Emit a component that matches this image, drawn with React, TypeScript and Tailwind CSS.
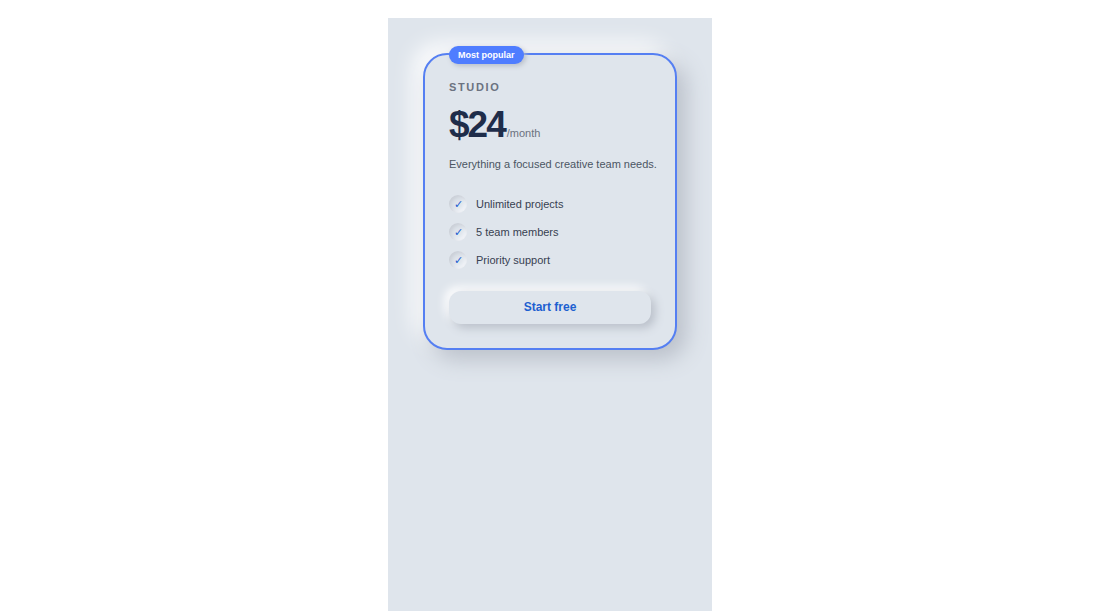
import React from "react";

const features = ["Unlimited projects", "5 team members", "Priority support"];

function FeatureItem({ label }: { label: string }) {
  return (
    <li className="flex items-center gap-[9px] text-[11px] leading-[18px] text-[#374151]">
      <span
        aria-hidden="true"
        className="flex size-[18px] shrink-0 items-center justify-center rounded-full text-[11px] text-[#1d5fd0] shadow-[inset_2px_2px_4px_#c8cdd5,inset_-2px_-2px_4px_#f4f6fa]"
      >
        ✓
      </span>
      {label}
    </li>
  );
}

export default function App() {
  return (
    <div className="flex h-screen justify-center overflow-hidden bg-white pt-[18px] font-['Liberation_Sans',Arial,sans-serif]">
      <main className="w-full max-w-[324px] overflow-hidden bg-[#dfe5ec] p-[35px]">
        <section className="relative rounded-3xl border-2 border-[#557ff2] bg-[#dfe5ec] p-6 shadow-[9px_9px_22px_#b9bfc9,-9px_-9px_22px_#ffffff]">
          <span className="absolute -top-[9px] left-6 rounded-full bg-[#4f7dff] px-[9px] text-[9px] leading-[18px] font-bold text-white shadow-[2px_2px_5px_#b9bfc9]">
            Most popular
          </span>
          <h2 className="text-[11px] leading-4 font-bold tracking-[0.15em] text-[#6b7280]">
            STUDIO
          </h2>
          <p className="mt-3 flex items-baseline gap-0.5 text-[#1f2d4a]">
            <span className="text-[37px] leading-9 font-bold tracking-[-2px]">$24</span>
            <span className="text-[11px] text-[#6b7280]">/month</span>
          </p>
          <p className="mt-3 text-[11px] leading-[18px] whitespace-nowrap text-[#4b5563]">
            Everything a focused creative team needs.
          </p>
          <ul className="mt-[22px] flex flex-col gap-2.5">
            {features.map((label) => (
              <FeatureItem key={label} label={label} />
            ))}
          </ul>
          <button
            type="button"
            className="mt-[22px] h-[33px] w-full rounded-xl bg-[#dfe5ec] pb-0.5 text-[12px] font-bold text-[#1d5fd0] shadow-[4px_4px_10px_#b9bfc9,-4px_-4px_10px_#ffffff]"
          >
            Start free
          </button>
        </section>
      </main>
    </div>
  );
}
